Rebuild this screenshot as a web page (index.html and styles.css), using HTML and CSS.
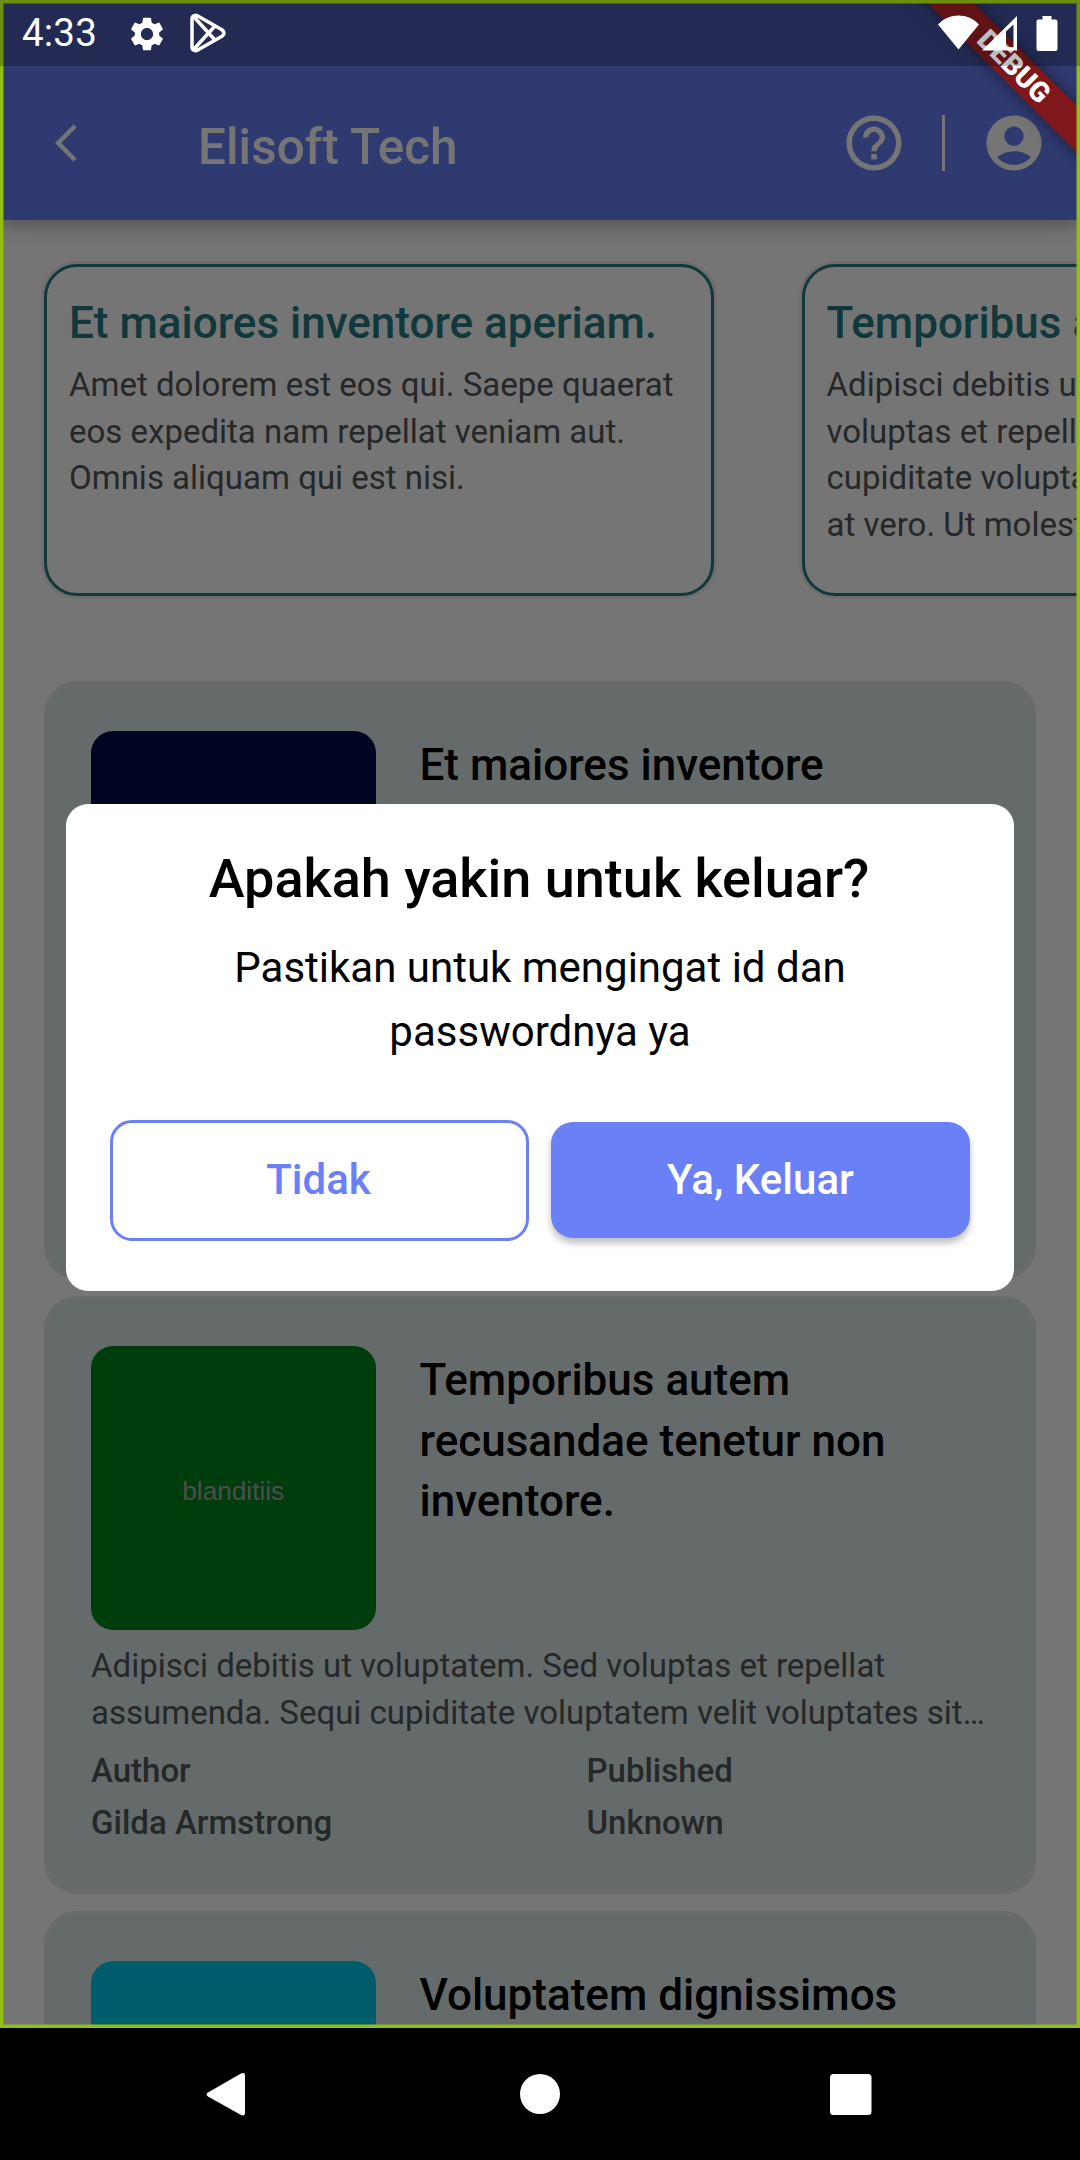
FILE: index.html
```html
<!DOCTYPE html>
<html lang="id">
<head>
<meta charset="utf-8">
<title>Elisoft Tech</title>
<link rel="stylesheet" href="styles.css">
</head>
<body>
<div class="device">
  <div class="screen">
    <header class="appbar">
      <svg class="back" viewBox="0 0 22 38"><path d="M20 2 3.2 19 20 36"/></svg>
      <h1 class="brand">Elisoft Tech</h1>
      <div class="actions">
        <svg class="icon" viewBox="0 0 24 24"><path d="M11 18h2v-2h-2v2zm1-16C6.480 2 2 6.480 2 12s4.480 10 10 10 10-4.480 10-10S17.520 2 12 2zm0 18c-4.410 0-8-3.590-8-8s3.590-8 8-8 8 3.590 8 8-3.590 8-8 8zm0-14c-2.210 0-4 1.790-4 4h2c0-1.100.9-2 2-2s2 .9 2 2c0 2-3 1.750-3 5h2c0-2.250 3-2.500 3-5 0-2.210-1.790-4-4-4z"/></svg>
        <span class="divider"></span>
        <svg class="icon" viewBox="0 0 24 24"><path d="M12 2C6.480 2 2 6.480 2 12s4.480 10 10 10 10-4.480 10-10S17.520 2 12 2zm0 4c1.930 0 3.500 1.570 3.500 3.500S13.930 13 12 13s-3.500-1.570-3.500-3.500S10.070 6 12 6zm0 14c-2.030 0-4.430-.82-6.140-2.880C7.550 15.800 9.680 15 12 15s4.450.8 6.140 2.120C16.430 19.180 14.030 20 12 20z"/></svg>
      </div>
    </header>
    <main class="content">
      <section class="carousel">
        <article class="slide">
          <h2 class="slide-title">Et maiores inventore aperiam.</h2>
          <p class="slide-text">Amet dolorem est eos qui. Saepe quaerat<br>eos expedita nam repellat veniam aut.<br>Omnis aliquam qui est nisi.</p>
        </article>
        <article class="slide">
          <h2 class="slide-title">Temporibus a</h2>
          <p class="slide-text">Adipisci debitis ut<br>voluptas et repella<br>cupiditate volupta<br>at vero. Ut molest</p>
        </article>
      </section>
      <section class="list">
        <article class="card">
          <div class="card-head">
            <div class="thumb navy"></div>
            <h3 class="card-title">Et maiores inventore</h3>
          </div>
        </article>
        <article class="card">
          <div class="card-head">
            <div class="thumb green">blanditiis</div>
            <h3 class="card-title">Temporibus autem<br>recusandae tenetur non<br>inventore.</h3>
          </div>
          <p class="card-text">Adipisci debitis ut voluptatem. Sed voluptas et repellat<br>assumenda. Sequi cupiditate voluptatem velit voluptates sit…</p>
          <dl class="meta">
            <div><dt>Author</dt><dd>Gilda Armstrong</dd></div>
            <div><dt>Published</dt><dd>Unknown</dd></div>
          </dl>
        </article>
        <article class="card">
          <div class="card-head">
            <div class="thumb cyan"></div>
            <h3 class="card-title">Voluptatem dignissimos</h3>
          </div>
        </article>
      </section>
    </main>
    <div class="scrim">
      <div class="dialog">
        <h2 class="dialog-title">Apakah yakin untuk keluar?</h2>
        <p class="dialog-text">Pastikan untuk mengingat id dan<br>passwordnya ya</p>
        <div class="buttons">
          <button class="btn outline">Tidak</button>
          <button class="btn filled">Ya, Keluar</button>
        </div>
      </div>
    </div>
    <div class="ribbon">DEBUG</div>
    <div class="glow"></div>
    <div class="statusbar">
      <span class="clock">4:33</span>
      <svg class="gear" viewBox="2 2 20 20"><path d="M19.140 12.940c.04-.3.060-.61.060-.94 0-.32-.02-.64-.07-.94l2.030-1.580c.18-.14.23-.41.12-.61l-1.920-3.320c-.12-.22-.37-.29-.59-.22l-2.390.96c-.5-.38-1.030-.7-1.620-.94l-.36-2.540c-.04-.24-.24-.41-.48-.41h-3.840c-.24 0-.43.17-.47.41l-.36 2.540c-.59.24-1.130.57-1.620.94l-2.390-.96c-.22-.08-.47 0-.59.22L2.740 8.870c-.12.21-.08.47.12.61l2.030 1.580c-.05.3-.09.63-.09.94s.02.64.07.94l-2.030 1.580c-.18.14-.23.41-.12.61l1.920 3.320c.12.22.37.29.59.22l2.390-.96c.5.38 1.030.7 1.620.94l.36 2.540c.05.24.24.41.48.41h3.840c.24 0 .44-.17.47-.41l.36-2.540c.59-.24 1.130-.56 1.620-.94l2.390.96c.22.08.47 0 .59-.22l1.920-3.320c.12-.22.070-.47-.12-.61l-2.010-1.580zM12 15.600c-1.980 0-3.600-1.620-3.600-3.600s1.620-3.600 3.600-3.600 3.600 1.620 3.600 3.600-1.620 3.600-3.600 3.600z"/></svg>
      <svg class="play" viewBox="0 0 36 40"><path d="M2 6v28c0 3.200 3 4.600 5.800 3L31.500 23.500c3.200-1.900 3.200-5.100 0-7L7.800 3C5 1.400 2 2.800 2 6zM3.500 3.500l21.500 23.500M3.500 36.500l21.500-23.500"/></svg>
      <svg class="signals" viewBox="0 0 122 38"><path d="M1 9.500C12-2.500 31-2.500 42 9.500L21.500 34.500z"/><path fill-rule="evenodd" d="M45 35.500 80 1V35.500zM69 16.500V32.200H76.500V9.400z"/><path d="M105.500 1h9v3.500h4a2 2 0 0 1 2 2V34a2 2 0 0 1-2 2h-17a2 2 0 0 1-2-2V6.500a2 2 0 0 1 2-2h4z"/></svg>
    </div>
  </div>
  <nav class="navbar">
    <svg class="nav-icons" viewBox="0 0 680 46"><path d="M36 2.500 3 21.500q-3 2 0 4L36 44q4 1.500 4-2.500V4.500Q40 1 36 2.500z"/><circle cx="335" cy="23" r="20"/><rect x="625" y="3" width="41.500" height="41" rx="3.500"/></svg>
  </nav>
</div>
</body>
</html>
```
FILE: styles.css
```css
* { box-sizing: border-box; margin: 0; padding: 0; }
body { width: 1080px; height: 2160px; overflow: hidden; background: #000; font-family: Roboto, "Liberation Sans", sans-serif; }
h1, h2, h3, dt, dd { font-weight: 500; }
.device { display: flex; flex-direction: column; width: 1080px; height: 2160px; }
.screen { position: relative; height: 2028px; overflow: hidden; background: #fff; }

.appbar { position: relative; z-index: 1; display: flex; align-items: center; height: 220px; padding: 66px 33px 0 55px; background: #667ef4; box-shadow: 0 6px 14px rgba(0,0,0,.2), 0 3px 28px rgba(0,0,0,.12); }
.back { width: 22px; height: 38px; fill: none; stroke: #fff; stroke-width: 4.500; }
.brand { margin: 7px 0 0 121px; font-size: 49.500px; line-height: 60px; color: #fff; white-space: nowrap; }
.actions { display: flex; align-items: center; margin-left: auto; }
.icon { width: 66px; height: 66px; fill: #fff; }
.divider { width: 3px; height: 56px; margin: 0 36px 0 35.500px; background: #fff; }

.content { display: flex; flex-direction: column; gap: 85px; padding: 44px; }
.carousel { display: flex; gap: 87.500px; }
.slide { flex: none; width: 670px; height: 332px; padding: 26px 22px; border: 3px solid #277a7e; border-radius: 33px; background: #fff; box-shadow: 0 0 0 3px rgba(0,0,0,.07); }
.slide-title { font-size: 44px; line-height: 60px; color: #277a7e; white-space: nowrap; }
.slide-text { margin-top: 9px; font-size: 33px; line-height: 46.600px; color: #535557; white-space: nowrap; }

.list { display: flex; flex-direction: column; gap: 17.500px; }
.card { flex: none; height: 597.500px; padding: 46px 43px; border: 4px solid #e8e8e8; border-radius: 33px; background: #dce9e6; }
.card-head { display: flex; gap: 44px; }
.thumb { flex: none; display: flex; align-items: center; justify-content: center; width: 284.500px; height: 284px; padding-top: 6px; border-radius: 22px; font: 26.200px/1 "Liberation Sans", sans-serif; color: #aba8ab; }
.navy { background: #000d4a; }
.green { background: #00851e; }
.cyan { background: #00cceb; }
.card-title { padding-top: 4px; font-size: 44px; line-height: 60.500px; color: #000; white-space: nowrap; }
.card-text { margin-top: 13px; font-size: 33px; line-height: 46.600px; color: #535557; white-space: nowrap; }
.meta { display: grid; grid-template-columns: 495.500px 1fr; margin-top: 9px; font-size: 33px; line-height: 52px; color: #535557; }

.scrim { position: absolute; inset: 0; z-index: 2; display: flex; justify-content: center; align-items: flex-start; padding-top: 803.500px; background: rgba(0,0,0,.54); }
.dialog { width: 948px; height: 487px; padding: 39px 44px; border-radius: 22px; background: #fff; text-align: center; }
.dialog-title { padding-right: 2px; font-size: 54px; line-height: 72px; color: #000; }
.dialog-text { margin-top: 21px; font-size: 42px; line-height: 64px; color: #000; }
.buttons { display: grid; grid-template-columns: 1fr 1fr; align-items: center; gap: 22px; margin-top: 56px; }
.btn { height: 116px; border: 0; border-radius: 22px; font: 500 42px/1 Roboto, sans-serif; }
.outline { height: 121px; padding-right: 2px; border: 3px solid #6980f7; background: #fff; color: #6980f7; }
.filled { background: #6980f7; color: #fff; box-shadow: 0 5px 7px rgba(0,0,0,.26); }

.ribbon { position: absolute; z-index: 3; left: 863.500px; top: 50px; width: 300px; height: 33px; transform: rotate(45deg); background: #80181b; box-shadow: 0 0 16px rgba(0,0,0,.5); color: #fff; font-size: 28px; font-weight: 900; line-height: 33px; text-align: center; }
.glow { position: absolute; inset: 0; z-index: 4; border: 3px solid #92bf13; box-shadow: inset 0 0 0 1px rgba(146,191,19,.5); }
.statusbar { position: absolute; z-index: 5; top: 0; left: 0; right: 0; display: flex; align-items: center; height: 66px; padding: 0 23px 0 22px; background: rgba(0,0,0,.25); }
.clock { width: 107px; font-size: 38.500px; line-height: 68px; letter-spacing: .2px; color: #fff; }
.gear { width: 34px; height: 36px; margin-left: .5px; margin-top: 1px; fill: #fff; }
.play { width: 36px; height: 40px; margin-left: 26px; fill: none; stroke: #fff; stroke-width: 3.500; }
.signals { width: 122px; height: 38px; margin-left: auto; margin-right: -2px; margin-top: 1px; fill: #fff; }

.navbar { display: flex; justify-content: center; align-items: center; height: 132px; padding-left: 10px; background: #000; }
.nav-icons { width: 680px; height: 46px; fill: #fff; }
```
